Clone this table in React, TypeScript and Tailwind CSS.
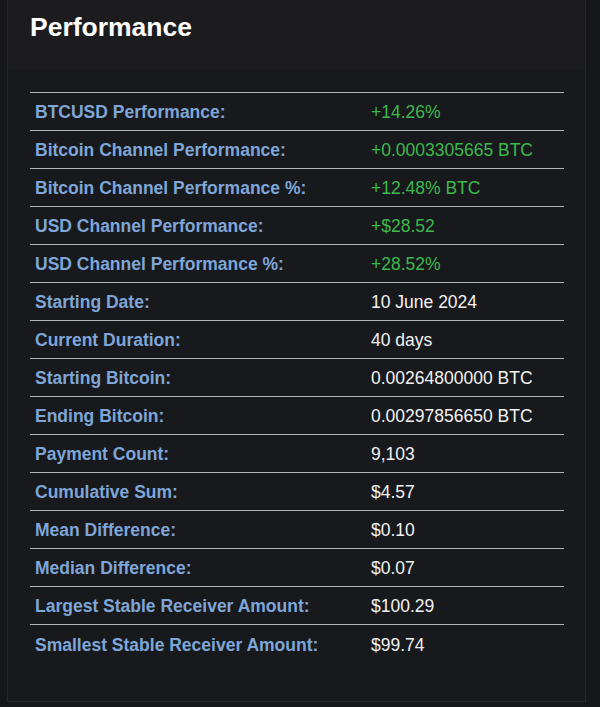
const rows: { label: string; value: string; green?: boolean }[] = [
  { label: "BTCUSD Performance:", value: "+14.26%", green: true },
  { label: "Bitcoin Channel Performance:", value: "+0.0003305665 BTC", green: true },
  { label: "Bitcoin Channel Performance %:", value: "+12.48% BTC", green: true },
  { label: "USD Channel Performance:", value: "+$28.52", green: true },
  { label: "USD Channel Performance %:", value: "+28.52%", green: true },
  { label: "Starting Date:", value: "10 June 2024" },
  { label: "Current Duration:", value: "40 days" },
  { label: "Starting Bitcoin:", value: "0.00264800000 BTC" },
  { label: "Ending Bitcoin:", value: "0.00297856650 BTC" },
  { label: "Payment Count:", value: "9,103" },
  { label: "Cumulative Sum:", value: "$4.57" },
  { label: "Mean Difference:", value: "$0.10" },
  { label: "Median Difference:", value: "$0.07" },
  { label: "Largest Stable Receiver Amount:", value: "$100.29" },
  { label: "Smallest Stable Receiver Amount:", value: "$99.74" },
];

export default function App() {
  return (
    <div className="h-[707px] w-[600px] bg-[#16171b] font-['Liberation_Sans',Arial,sans-serif]">
      <div className="ml-[7px] w-[579px] h-[702px] border border-t-0 border-[#25262b] bg-[#18191c]">
        <div className="h-[69px] bg-[#1c1c1e] pl-[22px] pt-[11px]">
          <h2 className="text-[26.5px] font-bold text-white leading-[32px]">Performance</h2>
        </div>
        <div className="pl-[22px] pt-[23px]">
          <table className="w-[534px] border-collapse">
            <tbody>
              {rows.map((r) => (
                <tr key={r.label} className="border-t-[1.5px] border-[#b4b4b6] h-[38px]">
                  <td className="w-[336px] pl-[5px] pt-[2px] text-[17.5px] font-bold text-[#7ea6d8]">{r.label}</td>
                  <td
                    className={`pl-[5px] pt-[2px] text-[17.5px] ${r.green ? "text-[#3db84c]" : "text-[#f2f2f2]"}`}
                  >
                    {r.value}
                  </td>
                </tr>
              ))}
            </tbody>
          </table>
        </div>
      </div>
    </div>
  );
}
